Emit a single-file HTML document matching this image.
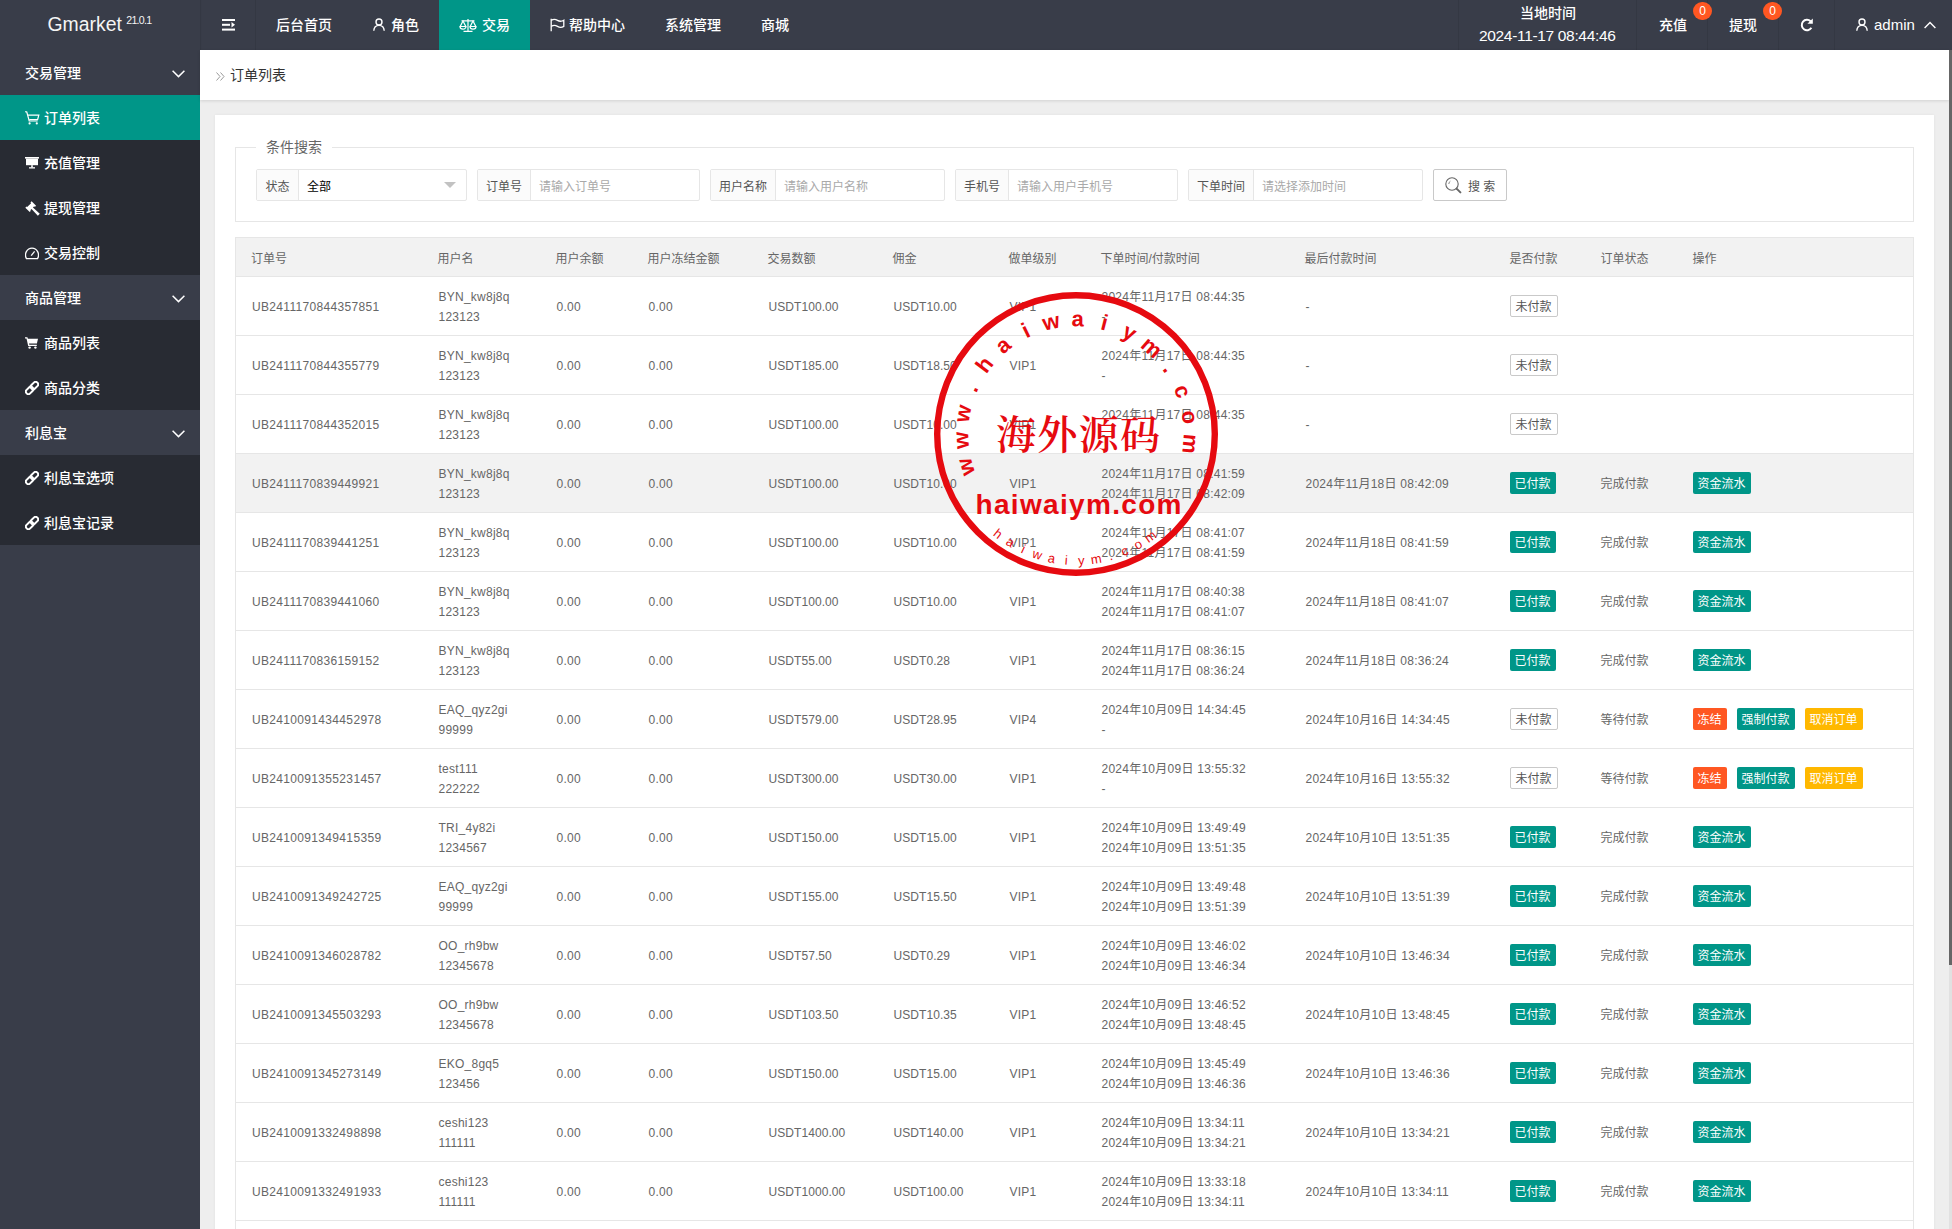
<!DOCTYPE html>
<html lang="zh-CN">
<head>
<meta charset="utf-8">
<title>订单列表</title>
<style>
*{box-sizing:border-box;margin:0;padding:0}
html,body{width:1952px;height:1229px;overflow:hidden}
body{position:relative;background:#eee;font-family:"Liberation Sans","Noto Sans CJK SC",sans-serif;font-size:14px;color:#333;line-height:24px}
a{text-decoration:none;color:inherit}
svg{display:block}
/* header */
.hdr{position:absolute;left:0;top:0;width:1952px;height:50px;background:#393D49;color:#fff;font-weight:500}
.logo{position:absolute;left:0;top:0;width:200px;height:50px;line-height:49px;text-align:center;font-size:19.4px;color:#f5f5f5;box-shadow:0 1px 2px 0 rgba(0,0,0,.15)}
.logo sup{font-size:10.6px;position:relative;top:-7px;left:-1px;vertical-align:baseline;letter-spacing:-.7px}
.nav{position:absolute;top:0;height:50px;line-height:50px;font-size:14px;color:#fff;white-space:nowrap}
.nav svg{position:absolute}
.sep{position:absolute;top:0;width:1px;height:50px;background:#343843}
.nav.act{background:#009688}
.badge{position:absolute;top:2px;width:19px;height:18px;border-radius:9px;background:#FF5722;color:#fff;font-size:12px;line-height:18px;text-align:center}
/* sidebar */
.side{position:absolute;left:0;top:50px;width:200px;height:1179px;background:#393D49;color:#fff;font-weight:500}
.side div{position:relative;height:45px;line-height:47px;font-size:14px;white-space:nowrap}
.side .g{padding-left:25px;background:#393D49}
.side .g svg{position:absolute;left:171.5px;top:19.5px}
.side .s{padding-left:44px;background:#282B33}
.side .s svg{position:absolute;left:25px}
.side .s.on{background:#009688}
/* main */
.crumb{position:absolute;left:200px;top:50px;width:1749px;height:50px;background:#fff;box-shadow:0 1px 3px rgba(0,0,0,.12);line-height:50px;font-size:14px;color:#333;padding-left:30px}
.crumb svg{position:absolute;left:15.5px;top:21.5px}
.card{position:absolute;left:215px;top:115px;width:1719px;height:1200px;background:#fff;box-shadow:0 0 3px rgba(0,0,0,.06)}
.fs{position:absolute;left:20px;top:32px;width:1679px;height:75px;border:1px solid #e6e6e6}
.fs .lg{position:absolute;left:20px;top:-13px;padding:0 10px;background:#fff;font-size:14px;line-height:24px;color:#666}
.grp{position:absolute;top:21px;height:32px;border:1px solid #e6e6e6;border-radius:2px;background:#fff;font-size:12px;line-height:34px}
.grp b{position:absolute;left:0;top:0;height:30px;font-weight:normal;color:#555;background:#fbfbfb;border-right:1px solid #e6e6e6;text-align:center}
.grp span{position:absolute;top:0;color:#a9a9a9}
.grp span.v{color:#000}
.grp em{position:absolute;right:10px;top:12px;width:0;height:0;border:6px solid transparent;border-top-color:#c2c2c2}
.sbtn{position:absolute;left:1197px;top:21px;width:74px;height:32px;border:1px solid #c9c9c9;border-radius:2px;background:#fff;font-size:12px;line-height:35px;color:#555;padding-left:34px}
.sbtn svg{position:absolute;left:11px;top:6.5px}
/* table */
.tbl{position:absolute;left:20px;top:122px;width:1679px;border-collapse:collapse;table-layout:fixed;border:1px solid #e6e6e6;font-size:12px;color:#666}
.tbl th{height:39px;background:#f2f2f2;font-weight:normal;text-align:left;padding:3px 15px 0;line-height:20px;border-bottom:1px solid #e6e6e6;white-space:nowrap}
.tbl td{height:59px;padding:2px 14px 0 16px;line-height:20px;border-bottom:1px solid #e6e6e6;white-space:nowrap;letter-spacing:.25px}
.tbl td.c{letter-spacing:0;padding-left:15px}
.tbl td.o{letter-spacing:.33px}
.tbl td.u{letter-spacing:.07px}
.tbl tr.hover td{background:#f2f2f2}
.btn{position:relative;top:-1px;display:inline-block;height:22px;line-height:24px;padding:0 5px;font-size:12px;border-radius:2px;color:#fff;margin-right:10px;vertical-align:middle}
.btn.grn{background:#009688}
.btn.org{background:#FF5722}
.btn.ylw{background:#FFB800}
.btn.prim{background:#fff;border:1px solid #c9c9c9;color:#555;line-height:22px}
/* scrollbar */
.sbar{position:absolute;left:1949px;top:50px;width:3px;height:1179px;background:#e1e1e1}
.sbar i{position:absolute;left:0;top:0;width:3px;height:915px;background:#666}
/* stamp */
.stamp{position:absolute;left:926px;top:283px;width:300px;height:300px}
</style>
</head>
<body>
<div class="hdr">
<div class="logo">Gmarket <sup>21.0.1</sup></div>
<div class="sep" style="left:200px"></div><div class="sep" style="left:255px"></div>
<div class="sep" style="left:1458px"></div><div class="sep" style="left:1636px"></div><div class="sep" style="left:1707px"></div><div class="sep" style="left:1778px"></div><div class="sep" style="left:1834px"></div>
<div class="nav" style="left:222px;width:13px"><svg style="left:0;top:19px" width="13" height="12" viewBox="0 0 13 12" fill="#fff"><rect x="0" y="0" width="13" height="2"/><rect x="0" y="4.8" width="8" height="2"/><rect x="0" y="9.6" width="13" height="2"/><path d="M9.5 3.1 L13 5.8 L9.5 8.5z"/></svg></div>
<div class="nav" style="left:276px">后台首页</div>
<div class="nav" style="left:391px"><svg style="left:-18px;top:18px" width="12" height="13" viewBox="0 0 12 13" fill="none" stroke="#fff" stroke-width="1.4"><circle cx="6" cy="4" r="3"/><path d="M0.8 12.8 C1 8.8 3.5 7.4 6 7.4 S11 8.8 11.2 12.8"/></svg>角色</div>
<div class="nav act" style="left:439px;width:91px;padding-left:43px"><svg style="left:20px;top:18px" width="18" height="14" viewBox="0 0 18 14" fill="none" stroke="#fff" stroke-width="1.2"><path d="M9 1 V13 M4.5 13.3 H13.5 M2.5 2.8 H15.5"/><path d="M4 3 L1.2 8.5 H6.8 Z"/><path d="M1 8.5 A3 2.6 0 0 0 7 8.5"/><path d="M14 3 L11.2 8.5 H16.8 Z"/><path d="M11 8.5 A3 2.6 0 0 0 17 8.5"/></svg>交易</div>
<div class="nav" style="left:569px"><svg style="left:-19px;top:18px" width="15" height="14" viewBox="0 0 15 14" fill="none" stroke="#fff" stroke-width="1.3"><path d="M1.2 0.8 V13.2"/><path d="M1.2 2.4 C3.5 1 5.5 1.2 7.5 2.4 S11.5 3.6 13.8 2.2 V8.4 C11.5 9.8 9.5 9.6 7.5 8.4 S3.5 7 1.2 8.4"/></svg>帮助中心</div>
<div class="nav" style="left:665px">系统管理</div>
<div class="nav" style="left:761px">商城</div>
<div class="nav" style="left:1520px;top:-12px">当地时间</div>
<div class="nav" style="left:1479px;top:11px;font-size:15.5px;letter-spacing:-.33px">2024-11-17 08:44:46</div>
<div class="nav" style="left:1659px">充值</div><div class="badge" style="left:1693px">0</div>
<div class="nav" style="left:1729px">提现</div><div class="badge" style="left:1763px">0</div>
<div class="nav" style="left:1800px;width:14px"><svg style="left:0;top:18px" width="14" height="14" viewBox="0 0 14 14" fill="none" stroke="#fff" stroke-width="2"><path d="M11.4 9.8 A5.2 5.2 0 1 1 10.6 3.3"/><path d="M12.8 0.4 V5.8 H7.4 Z" fill="#fff" stroke="none"/></svg></div>
<div class="nav" style="left:1874px;font-size:15px"><svg style="left:-18px;top:18px" width="12" height="13" viewBox="0 0 12 13" fill="none" stroke="#fff" stroke-width="1.4"><circle cx="6" cy="4" r="3"/><path d="M0.8 12.8 C1 8.8 3.5 7.4 6 7.4 S11 8.8 11.2 12.8"/></svg>admin<svg style="left:50px;top:21px" width="12" height="8" viewBox="0 0 12 8" fill="none" stroke="#fff" stroke-width="1.4"><path d="M0.6 7 L6 1.4 L11.4 7"/></svg></div>
</div>
<div class="side">
<div class="g">交易管理<svg width="13" height="8" viewBox="0 0 13 8" fill="none" stroke="#fff" stroke-width="1.5"><path d="M0.6 0.8 L6.5 6.6 L12.4 0.8"/></svg></div>
<div class="s on"><svg style="top:16px" width="15" height="14" viewBox="0 0 15 14" fill="none" stroke="#fff" stroke-width="1.2"><path d="M0.2 0.6 L1.8 1 L4.2 10 H12.6"/><path d="M3 4.2 H13.8 L12.6 8.6 H4.2"/><circle cx="4.6" cy="12.4" r="1.1" fill="#fff" stroke="none"/><circle cx="11.8" cy="12.4" r="1.1" fill="#fff" stroke="none"/></svg>订单列表</div>
<div class="s"><svg style="top:17px" width="14" height="12" viewBox="0 0 14 12" fill="#fff"><rect x="0" y="0" width="14" height="1.6"/><rect x="1" y="1.6" width="12" height="6.6"/><rect x="6.2" y="8.2" width="1.6" height="2.2"/><rect x="4" y="10.2" width="6" height="1.3"/></svg>充值管理</div>
<div class="s"><svg style="top:15.5px;left:24.5px" width="15" height="15" viewBox="0 0 14 14" fill="#fff"><path d="M6.2 0.3 L10.3 4.4 L9.2 5.5 L8.6 4.9 L7.4 6.1 L13.8 12 L12 13.8 L6.1 7.4 L4.9 8.6 L5.5 9.2 L4.4 10.3 L0.3 6.2 L1.4 5.1 L2 5.7 L5.7 2 L5.1 1.4Z"/></svg>提现管理</div>
<div class="s"><svg style="top:17px" width="14" height="13" viewBox="0 0 14 13" fill="none" stroke="#fff" stroke-width="1.3"><path d="M1.5 11.6 C-1.2 7 2 1.2 7 1.2 S15.2 7 12.5 11.6 Z"/><path d="M6.2 8.6 L9.6 4.4"/></svg>交易控制</div>
<div class="g">商品管理<svg width="13" height="8" viewBox="0 0 13 8" fill="none" stroke="#fff" stroke-width="1.5"><path d="M0.6 0.8 L6.5 6.6 L12.4 0.8"/></svg></div>
<div class="s"><svg style="top:17px" width="13" height="12" viewBox="0 0 13 12" fill="#fff"><path d="M0 0.3 H2.4 L2.9 1.8 H13 L11.9 6.6 H4 L4.3 7.8 H11.8 V9 H3.2 L1.5 1.5 H0Z"/><circle cx="4.6" cy="10.6" r="1.2"/><circle cx="10.4" cy="10.6" r="1.2"/></svg>商品列表</div>
<div class="s"><svg style="top:16px" width="14" height="14" viewBox="0 0 14 14" fill="none" stroke="#fff" stroke-width="2"><g transform="rotate(-45 7 7)"><rect x="-0.6" y="4.5" width="8.4" height="5" rx="2.5"/><rect x="6.2" y="4.5" width="8.4" height="5" rx="2.5"/></g></svg>商品分类</div>
<div class="g">利息宝<svg width="13" height="8" viewBox="0 0 13 8" fill="none" stroke="#fff" stroke-width="1.5"><path d="M0.6 0.8 L6.5 6.6 L12.4 0.8"/></svg></div>
<div class="s"><svg style="top:16px" width="14" height="14" viewBox="0 0 14 14" fill="none" stroke="#fff" stroke-width="2"><g transform="rotate(-45 7 7)"><rect x="-0.6" y="4.5" width="8.4" height="5" rx="2.5"/><rect x="6.2" y="4.5" width="8.4" height="5" rx="2.5"/></g></svg>利息宝选项</div>
<div class="s"><svg style="top:16px" width="14" height="14" viewBox="0 0 14 14" fill="none" stroke="#fff" stroke-width="2"><g transform="rotate(-45 7 7)"><rect x="-0.6" y="4.5" width="8.4" height="5" rx="2.5"/><rect x="6.2" y="4.5" width="8.4" height="5" rx="2.5"/></g></svg>利息宝记录</div>
</div>
<div class="crumb"><svg width="9" height="9" viewBox="0 0 9 9" fill="none" stroke="#999" stroke-width="1"><path d="M0.5 0.5 L4 4.5 L0.5 8.5 M4.5 0.5 L8 4.5 L4.5 8.5"/></svg>订单列表</div>
<div class="card">
<div class="fs"><span class="lg">条件搜索</span>
<div class="grp" style="left:20px;width:211px"><b style="width:42px">状态</b><span class="v" style="left:50px">全部</span><em></em></div>
<div class="grp" style="left:241px;width:223px"><b style="width:53px">订单号</b><span style="left:61px">请输入订单号</span></div>
<div class="grp" style="left:474px;width:235px"><b style="width:65px">用户名称</b><span style="left:73px">请输入用户名称</span></div>
<div class="grp" style="left:719px;width:223px"><b style="width:53px">手机号</b><span style="left:61px">请输入用户手机号</span></div>
<div class="grp" style="left:952px;width:235px"><b style="width:65px">下单时间</b><span style="left:73px">请选择添加时间</span></div>
<div class="sbtn"><svg width="17" height="17" viewBox="0 0 17 17" fill="none" stroke="#666" stroke-width="1.1"><circle cx="7" cy="7" r="6.2"/><path d="M11.6 11.6 L15.4 15.4" stroke-width="2" stroke-linecap="round"/><path d="M3.8 7 A3.2 3.2 0 0 1 5.4 4.2" stroke-width="0.8"/></svg>搜 索</div>
</div>
<div>

<table class="tbl">
<colgroup><col style="width:187px"><col style="width:118px"><col style="width:92px"><col style="width:120px"><col style="width:125px"><col style="width:116px"><col style="width:92px"><col style="width:204px"><col style="width:205px"><col style="width:91px"><col style="width:92px"><col></colgroup>
<thead><tr><th>订单号</th><th>用户名</th><th>用户余额</th><th>用户冻结金额</th><th>交易数额</th><th>佣金</th><th>做单级别</th><th>下单时间/付款时间</th><th>最后付款时间</th><th>是否付款</th><th>订单状态</th><th>操作</th></tr></thead>
<tbody>
<tr><td class="o">UB2411170844357851</td><td>BYN_kw8j8q<br>123123</td><td>0.00</td><td>0.00</td><td class="u">USDT100.00</td><td class="u">USDT10.00</td><td>VIP1</td><td>2024年11月17日 08:44:35<br>-</td><td>-</td><td class="c"><span class="btn prim">未付款</span></td><td class="c"></td><td class="c"></td></tr>
<tr><td class="o">UB2411170844355779</td><td>BYN_kw8j8q<br>123123</td><td>0.00</td><td>0.00</td><td class="u">USDT185.00</td><td class="u">USDT18.50</td><td>VIP1</td><td>2024年11月17日 08:44:35<br>-</td><td>-</td><td class="c"><span class="btn prim">未付款</span></td><td class="c"></td><td class="c"></td></tr>
<tr><td class="o">UB2411170844352015</td><td>BYN_kw8j8q<br>123123</td><td>0.00</td><td>0.00</td><td class="u">USDT100.00</td><td class="u">USDT10.00</td><td>VIP1</td><td>2024年11月17日 08:44:35<br>-</td><td>-</td><td class="c"><span class="btn prim">未付款</span></td><td class="c"></td><td class="c"></td></tr>
<tr class="hover"><td class="o">UB2411170839449921</td><td>BYN_kw8j8q<br>123123</td><td>0.00</td><td>0.00</td><td class="u">USDT100.00</td><td class="u">USDT10.00</td><td>VIP1</td><td>2024年11月17日 08:41:59<br>2024年11月17日 08:42:09</td><td>2024年11月18日 08:42:09</td><td class="c"><span class="btn grn">已付款</span></td><td class="c">完成付款</td><td class="c"><a class="btn grn">资金流水</a></td></tr>
<tr><td class="o">UB2411170839441251</td><td>BYN_kw8j8q<br>123123</td><td>0.00</td><td>0.00</td><td class="u">USDT100.00</td><td class="u">USDT10.00</td><td>VIP1</td><td>2024年11月17日 08:41:07<br>2024年11月17日 08:41:59</td><td>2024年11月18日 08:41:59</td><td class="c"><span class="btn grn">已付款</span></td><td class="c">完成付款</td><td class="c"><a class="btn grn">资金流水</a></td></tr>
<tr><td class="o">UB2411170839441060</td><td>BYN_kw8j8q<br>123123</td><td>0.00</td><td>0.00</td><td class="u">USDT100.00</td><td class="u">USDT10.00</td><td>VIP1</td><td>2024年11月17日 08:40:38<br>2024年11月17日 08:41:07</td><td>2024年11月18日 08:41:07</td><td class="c"><span class="btn grn">已付款</span></td><td class="c">完成付款</td><td class="c"><a class="btn grn">资金流水</a></td></tr>
<tr><td class="o">UB2411170836159152</td><td>BYN_kw8j8q<br>123123</td><td>0.00</td><td>0.00</td><td class="u">USDT55.00</td><td class="u">USDT0.28</td><td>VIP1</td><td>2024年11月17日 08:36:15<br>2024年11月17日 08:36:24</td><td>2024年11月18日 08:36:24</td><td class="c"><span class="btn grn">已付款</span></td><td class="c">完成付款</td><td class="c"><a class="btn grn">资金流水</a></td></tr>
<tr><td class="o">UB2410091434452978</td><td>EAQ_qyz2gi<br>99999</td><td>0.00</td><td>0.00</td><td class="u">USDT579.00</td><td class="u">USDT28.95</td><td>VIP4</td><td>2024年10月09日 14:34:45<br>-</td><td>2024年10月16日 14:34:45</td><td class="c"><span class="btn prim">未付款</span></td><td class="c">等待付款</td><td class="c"><a class="btn org">冻结</a><a class="btn grn">强制付款</a><a class="btn ylw">取消订单</a></td></tr>
<tr><td class="o">UB2410091355231457</td><td>test111<br>222222</td><td>0.00</td><td>0.00</td><td class="u">USDT300.00</td><td class="u">USDT30.00</td><td>VIP1</td><td>2024年10月09日 13:55:32<br>-</td><td>2024年10月16日 13:55:32</td><td class="c"><span class="btn prim">未付款</span></td><td class="c">等待付款</td><td class="c"><a class="btn org">冻结</a><a class="btn grn">强制付款</a><a class="btn ylw">取消订单</a></td></tr>
<tr><td class="o">UB2410091349415359</td><td>TRI_4y82i<br>1234567</td><td>0.00</td><td>0.00</td><td class="u">USDT150.00</td><td class="u">USDT15.00</td><td>VIP1</td><td>2024年10月09日 13:49:49<br>2024年10月09日 13:51:35</td><td>2024年10月10日 13:51:35</td><td class="c"><span class="btn grn">已付款</span></td><td class="c">完成付款</td><td class="c"><a class="btn grn">资金流水</a></td></tr>
<tr><td class="o">UB2410091349242725</td><td>EAQ_qyz2gi<br>99999</td><td>0.00</td><td>0.00</td><td class="u">USDT155.00</td><td class="u">USDT15.50</td><td>VIP1</td><td>2024年10月09日 13:49:48<br>2024年10月09日 13:51:39</td><td>2024年10月10日 13:51:39</td><td class="c"><span class="btn grn">已付款</span></td><td class="c">完成付款</td><td class="c"><a class="btn grn">资金流水</a></td></tr>
<tr><td class="o">UB2410091346028782</td><td>OO_rh9bw<br>12345678</td><td>0.00</td><td>0.00</td><td class="u">USDT57.50</td><td class="u">USDT0.29</td><td>VIP1</td><td>2024年10月09日 13:46:02<br>2024年10月09日 13:46:34</td><td>2024年10月10日 13:46:34</td><td class="c"><span class="btn grn">已付款</span></td><td class="c">完成付款</td><td class="c"><a class="btn grn">资金流水</a></td></tr>
<tr><td class="o">UB2410091345503293</td><td>OO_rh9bw<br>12345678</td><td>0.00</td><td>0.00</td><td class="u">USDT103.50</td><td class="u">USDT10.35</td><td>VIP1</td><td>2024年10月09日 13:46:52<br>2024年10月09日 13:48:45</td><td>2024年10月10日 13:48:45</td><td class="c"><span class="btn grn">已付款</span></td><td class="c">完成付款</td><td class="c"><a class="btn grn">资金流水</a></td></tr>
<tr><td class="o">UB2410091345273149</td><td>EKO_8gq5<br>123456</td><td>0.00</td><td>0.00</td><td class="u">USDT150.00</td><td class="u">USDT15.00</td><td>VIP1</td><td>2024年10月09日 13:45:49<br>2024年10月09日 13:46:36</td><td>2024年10月10日 13:46:36</td><td class="c"><span class="btn grn">已付款</span></td><td class="c">完成付款</td><td class="c"><a class="btn grn">资金流水</a></td></tr>
<tr><td class="o">UB2410091332498898</td><td>ceshi123<br>111111</td><td>0.00</td><td>0.00</td><td class="u">USDT1400.00</td><td class="u">USDT140.00</td><td>VIP1</td><td>2024年10月09日 13:34:11<br>2024年10月09日 13:34:21</td><td>2024年10月10日 13:34:21</td><td class="c"><span class="btn grn">已付款</span></td><td class="c">完成付款</td><td class="c"><a class="btn grn">资金流水</a></td></tr>
<tr><td class="o">UB2410091332491933</td><td>ceshi123<br>111111</td><td>0.00</td><td>0.00</td><td class="u">USDT1000.00</td><td class="u">USDT100.00</td><td>VIP1</td><td>2024年10月09日 13:33:18<br>2024年10月09日 13:34:11</td><td>2024年10月10日 13:34:11</td><td class="c"><span class="btn grn">已付款</span></td><td class="c">完成付款</td><td class="c"><a class="btn grn">资金流水</a></td></tr>
<tr><td colspan="12"></td></tr>
</tbody></table>

</div></div>
<svg class="stamp" viewBox="0 0 300 300" width="300" height="300" font-family="'Liberation Sans','Noto Sans CJK SC',sans-serif" fill="#e60a10">
<circle cx="150.0" cy="151.0" r="138.8" fill="none" stroke="#e60a10" stroke-width="6.4"/>
<text font-size="22" font-weight="bold" x="49.3 43.0 42.6 50.3 60.2 77.0 100.2 118.3 145.6 173.7 194.8 213.6 236.0 247.6 255.4 258.0" y="189.9 165.5 140.2 110.5 91.4 71.7 55.6 47.8 43.3 46.0 53.0 63.6 86.3 105.2 128.6 150.6" rotate="253.4 266.8 280.3 293.7 307.2 320.6 334.0 347.5 0.9 14.4 27.8 41.2 54.7 68.1 81.6 95.0">www.haiwaiym.com</text>
<text font-size="40" font-weight="600" font-family="'Liberation Serif','Noto Serif CJK SC',serif" x="152.0" y="166.0" text-anchor="middle" textLength="164" lengthAdjust="spacing">海外源码</text>
<text font-size="28" font-weight="bold" x="49.5" y="231" textLength="206" lengthAdjust="spacing">haiwaiym.com</text>
<text font-size="13" x="66.5 78.9 94.3 105.4 121.3 138.6 152.2 165.4 184.0 197.2 210.9 222.6" y="252.0 261.1 269.6 274.3 278.9 281.5 282.0 281.2 277.5 273.2 267.0 260.2" rotate="38.0 31.3 24.5 17.8 11.1 4.4 357.6 350.9 344.2 337.5 330.7 324.0">haiwaiym.com</text>
</svg>

<div class="sbar"><i></i></div>
</body>
</html>
